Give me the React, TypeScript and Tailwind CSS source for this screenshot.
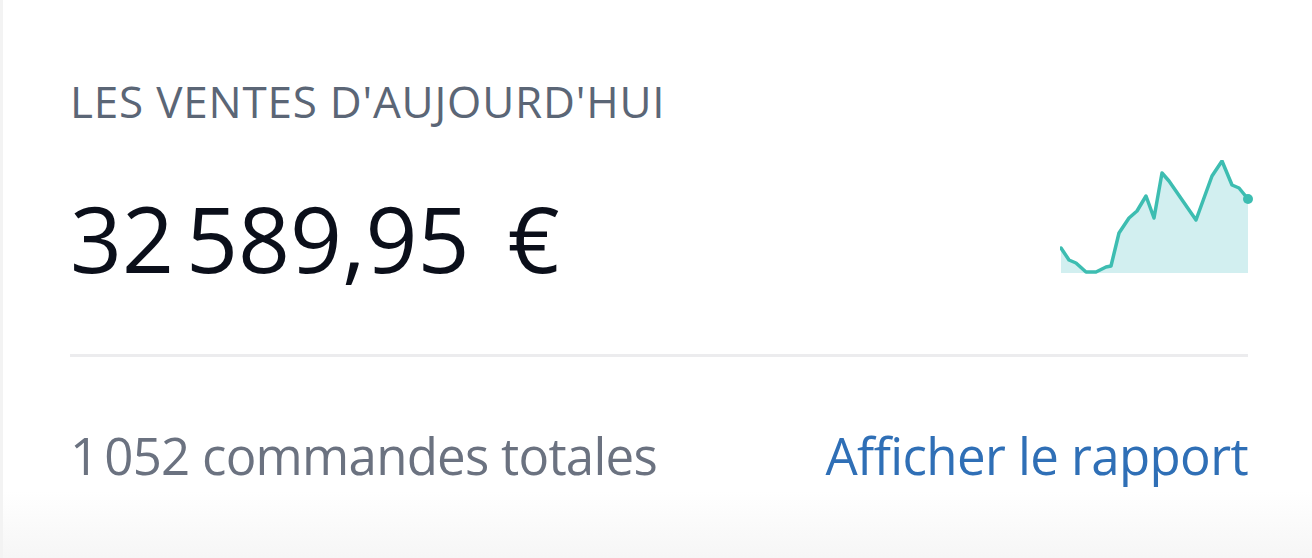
import React from 'react';

const points: [number, number][] = [
  [1, 88], [9, 100], [16, 103], [26, 112], [36, 112], [46, 107], [51, 106],
  [59, 73], [69, 58], [77, 51], [86, 36], [94, 58], [102, 13], [109, 21],
  [136, 60], [152, 16], [162, 1], [172, 25], [179, 28], [188, 39],
];

const Sparkline: React.FC = () => {
  const line = points.map(([x, y], i) => `${i === 0 ? 'M' : 'L'}${x} ${y}`).join(' ');
  const area = `${line} L188 113 L1 113 Z`;
  return (
    <svg width="194" height="118" viewBox="0 0 194 118" className="block">
      <path d={area} fill="#d2eff0" />
      <path d={line} fill="none" stroke="#3dbdb1" strokeWidth={3.5} strokeLinejoin="round" strokeLinecap="round" />
      <circle cx={188} cy={39} r={5} fill="#3dbdb1" />
    </svg>
  );
};

const App: React.FC = () => {
  return (
    <div
      className="w-[1312px] h-[558px] bg-gradient-to-b from-white from-[88%] to-[#f6f6f6] overflow-hidden"
      style={{ fontFamily: '"Open Sans", "Noto Sans", sans-serif' }}
    >
      <div className="h-full border-l-[3px] border-[#f3f3f3] pl-[67px] pr-[62px] pt-[75px]">
        {/* Title */}
        <h2 className="text-[44px] leading-[52px] text-[#5b6676] tracking-[0.8px]">
          LES VENTES D'AUJOURD'HUI
        </h2>

        {/* Amount + chart */}
        <div className="flex items-start justify-between mt-[33px]">
          <div className="mt-[28px] flex text-[91px] leading-[100px] text-[#0b0f1a] whitespace-nowrap">
            <span className="tracking-[0.05em]">32&#8239;589,95</span>
            <span className="ml-[38px]">€</span>
          </div>
          <div className="mr-[-4px]">
            <Sparkline />
          </div>
        </div>

        {/* Divider */}
        <div className="h-[3px] bg-[#ececee] mt-[66px] mr-[2px]" />

        {/* Footer */}
        <div className="flex items-center justify-between mt-[68px]">
          <span className="text-[51px] leading-[60px] text-[#6b7280] tracking-[-0.75px]">
            1&#8239;052 commandes totales
          </span>
          <a href="#" className="mr-[2px] text-[51px] leading-[60px] text-[#2f6fb6] tracking-[-0.6px]">
            Afficher le rapport
          </a>
        </div>
      </div>
    </div>
  );
};

export default App;
